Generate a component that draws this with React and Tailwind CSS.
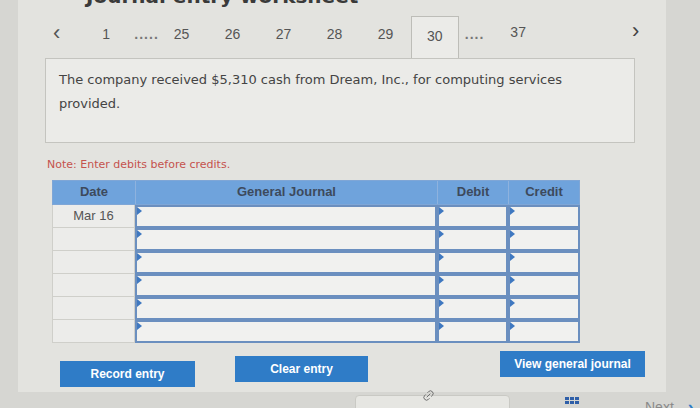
import { Link2 } from "lucide-react";

const tabs = ["25", "26", "27", "28", "29"];

const Marker = () => (
  <span className="absolute left-0 top-0 h-0 w-0 border-t-[4px] border-b-[4px] border-l-[5px] border-t-transparent border-b-transparent border-l-[#3f78c0]" />
);

const InputCell = ({ className }) => (
  <div className={`relative h-[23px] border-2 border-[#6b8fbf] bg-[#f1f1ef] ${className}`}>
    <Marker />
  </div>
);

const JournalEntry = () => {
  const rows = ["Mar 16", "", "", "", "", ""];

  return (
    <div className="h-[408px] w-[700px] overflow-hidden bg-[#d6d6d2] font-['Liberation_Sans',Arial,sans-serif]">
      <div className="ml-[18px] flow-root h-[392px] w-[648px] bg-[#e3e3df]">
        {/* title, mostly scrolled off */}
        <div className="-mt-[16px] pl-[68px] font-['DejaVu_Sans',sans-serif] text-[20px] font-bold leading-[24px] text-[#3a3a3a]">
          Journal entry worksheet
        </div>

        {/* pager */}
        <div className="mt-[8px] flex h-[42px] items-end text-[14px] text-[#555]">
          <span className="mb-[14px] ml-[35px] text-[22px] leading-none text-[#555]">‹</span>
          <span className="mb-[13px] ml-[42px] w-[10px]">1</span>
          <span className="mb-[13px] ml-[22px] font-bold tracking-[1px] text-[#777]">.....</span>
          <div className="mb-[13px] ml-[15px] flex">
            {tabs.map((t) => (
              <span key={t} className="w-[51px]">{t}</span>
            ))}
          </div>
          <div className="-ml-[18px] flex h-[42px] w-[48px] items-start justify-center border border-b-0 border-[#bdbdb8] bg-[#ebebe8] pt-[9px]">
            30
          </div>
          <span className="mb-[13px] ml-[6px] font-bold tracking-[1px] text-[#777]">....</span>
          <span className="mb-[15px] ml-[26px]">37</span>
          <span className="mb-[16px] ml-[106px] text-[22px] leading-none text-[#444]">›</span>
        </div>

        {/* question panel */}
        <div className="ml-[27px] h-[85px] w-[590px] border border-[#c4c4bf] bg-[#ebebe8] px-[13px] pt-[9px] font-['DejaVu_Sans',sans-serif] text-[13px] leading-[24px] text-[#444]">
          The company received $5,310 cash from Dream, Inc., for computing services provided.
        </div>

        {/* note */}
        <div className="ml-[29px] mt-[14px] font-['DejaVu_Sans',sans-serif] text-[11px] text-[#c5524d]">
          Note: Enter debits before credits.
        </div>

        {/* table */}
        <div className="ml-[34px] mt-[6px] w-[528px]">
          <div className="flex h-[25px] items-center border border-[#7fa6d6] bg-[#6fa3dc] text-[13px] font-bold text-[#3d4a5c]">
            <div className="flex h-full w-[83px] items-center justify-center border-r border-[#8eb2de]">Date</div>
            <div className="flex h-full w-[302px] items-center justify-center border-r border-[#8eb2de]">General Journal</div>
            <div className="flex h-full w-[71px] items-center justify-center border-r border-[#8eb2de]">Debit</div>
            <div className="flex h-full flex-1 items-center justify-center">Credit</div>
          </div>
          {rows.map((d, i) => (
            <div key={i} className="flex">
              <div className="flex h-[23px] w-[83px] items-center justify-center border border-t-0 border-[#cfcfca] bg-[#ececea] text-[13px] text-[#555]">
                {d}
              </div>
              <InputCell className="w-[302px]" />
              <InputCell className="w-[71px]" />
              <InputCell className="flex-1" />
            </div>
          ))}
        </div>

        {/* buttons */}
        <div className="mt-[8px] flex items-start text-[12px] font-bold text-white">
          <button className="ml-[42px] mt-[10px] h-[26px] w-[135px] bg-[#2f7cc7]">Record entry</button>
          <button className="ml-[40px] mt-[5px] h-[26px] w-[133px] bg-[#2f7cc7]">Clear entry</button>
          <button className="ml-[132px] h-[26px] w-[145px] bg-[#2f7cc7]">View general journal</button>
        </div>
      </div>

      {/* bottom bar */}
      <div className="flex items-start">
        <div className="relative ml-[355px] mt-[3px] h-[20px] w-[155px] rounded-sm border border-[#c9c9c4] bg-[#e6e6e2]">
          <Link2 size={13} className="absolute -top-[7px] left-[66px] rotate-[-45deg] text-[#666]" strokeWidth={1.6} />
        </div>
        <div className="ml-[55px] mt-[5px] grid grid-cols-3 gap-[1px]">
          {Array.from({ length: 6 }).map((_, i) => (
            <span key={i} className="h-[3px] w-[4px] bg-[#2f5fa8]" />
          ))}
        </div>
        <span className="ml-[66px] mt-[5px] text-[14px] text-[#8a8a8a]">Next</span>
        <span className="ml-[14px] mt-[2px] text-[18px] font-bold text-[#2f7cc7]">›</span>
      </div>
    </div>
  );
};

export default JournalEntry;
